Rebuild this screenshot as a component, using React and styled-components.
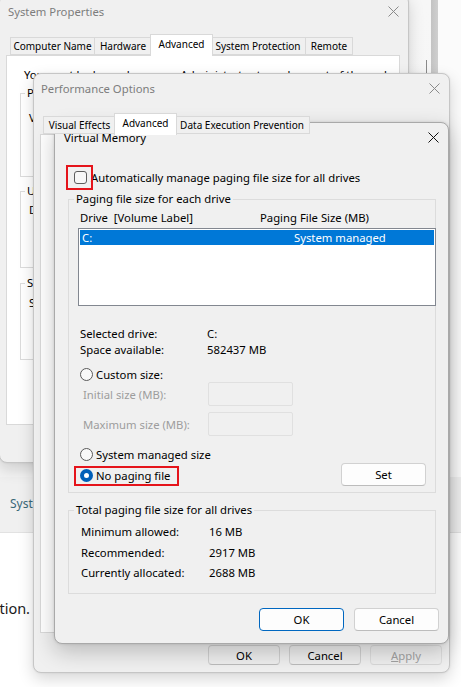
import React from "react";
import styled, { createGlobalStyle, css } from "styled-components";

const FONT = `"Noto Sans", "Open Sans", "DejaVu Sans", sans-serif`;

const GlobalStyle = createGlobalStyle`
  html, body { margin: 0; padding: 0; }
  body {
    font-family: ${FONT};
    font-size: 11.3px;
    color: #000;
    background: #fbfbfb;
    overflow: hidden;
  }
  * { box-sizing: border-box; }
`;

/* ---------- desktop & backdrop (settings app behind the dialogs) ---------- */

const Desktop = styled.div`
  position: relative;
  width: 461px;
  height: 687px;
  overflow: hidden;
  background: #fbfbfb;
`;

const Backdrop = styled.div`
  display: flex;
  flex-direction: column;
  height: 100%;
`;

const BackTop = styled.div`
  height: 477px;
  display: flex;
`;

const BackFill = styled.div`
  flex: 1;
  background: #f3f3f3;
`;

const BackSide = styled.div`
  width: 52px;
  display: flex;
`;

const SidePane = styled.div`
  width: 22px;
  background: linear-gradient(180deg, #f7f7f7 0%, #f4f4f4 100%);
  display: flex;
  flex-direction: column;
  align-items: flex-end;
  padding-right: 4px;
`;

const Tick = styled.div`
  margin-top: 60px;
  width: 1px;
  height: 13px;
  background: #8a8a8a;
`;

const Scrollbar = styled.div`
  width: 7px;
  background: linear-gradient(90deg, #c3c3c3, #cfcfcf);
`;

const SideRest = styled.div`
  flex: 1;
  background: #fbfbfb;
`;

const Band = styled.div`
  height: 56px;
  background: #f0f0f0;
  border-bottom: 1px solid #e2e2e2;
  display: flex;
  align-items: center;
  padding: 0 0 2px 10px;
  font-size: 12px;
  color: #3a6878;
  white-space: nowrap;
`;

const BackPage = styled.div`
  flex: 1;
  background: #ffffff;
  padding-top: 65px;
`;

const ClipText = styled.div`
  width: 30px;
  overflow: hidden;
  display: flex;
  justify-content: flex-end;
  white-space: nowrap;
  font-size: 14.5px;
  line-height: 20px;
  color: #1b1b1b;
`;

/* ---------- windows ---------- */

const Window = styled.div`
  position: absolute;
  left: ${(p) => p.$x}px;
  top: ${(p) => p.$y}px;
  width: ${(p) => p.$w}px;
  height: ${(p) => p.$h}px;
  background: #f0f0f0;
  border: 1px solid ${(p) => (p.$active ? "#a9a9a9" : "#c6c6c6")};
  border-radius: 8px;
  box-shadow: ${(p) =>
    p.$active
      ? "0 8px 22px rgba(0,0,0,0.22), 0 0 3px rgba(0,0,0,0.12)"
      : "0 6px 16px rgba(0,0,0,0.16), 0 0 2px rgba(0,0,0,0.1)"};
  display: flex;
  flex-direction: column;
  overflow: hidden;
`;

const TitleBar = styled.div`
  height: ${(p) => p.$h}px;
  flex: none;
  display: flex;
  align-items: center;
  justify-content: space-between;
  padding: 0 9px ${(p) => p.$pb || 0}px ${(p) => p.$pl}px;
  color: ${(p) => (p.$active ? "#000" : "#7d7d7d")};
  font-size: 11.3px;
`;

const CloseIcon = ({ color }) => (
  <svg width="11" height="11" viewBox="0 0 11 11" aria-hidden="true">
    <path d="M0.5 0.5L10.5 10.5M10.5 0.5L0.5 10.5" stroke={color} strokeWidth="1" />
  </svg>
);

/* ---------- tabs ---------- */

const TabStrip = styled.div`
  display: flex;
  align-items: flex-end;
  padding: ${(p) => p.$pt}px 0 0 ${(p) => p.$pl}px;
  position: relative;
  z-index: 1;
`;

const Tab = styled.div`
  width: ${(p) => p.$w}px;
  height: ${(p) => (p.$selected ? 22 : 18)}px;
  margin: ${(p) => (p.$selected ? "0 -2px -1px" : "0")};
  display: flex;
  align-items: center;
  justify-content: center;
  white-space: nowrap;
  font-size: 10px;
  background: ${(p) => (p.$selected ? "#ffffff" : "#f0f0f0")};
  border: 1px solid #d9d9d9;
  border-bottom: ${(p) => (p.$selected ? "none" : "1px solid #d9d9d9")};
  border-left: ${(p) => (p.$selected || p.$first ? "1px solid #d9d9d9" : "none")};
  position: relative;
  z-index: ${(p) => (p.$selected ? 2 : 1)};
  padding-bottom: ${(p) => (p.$selected ? 3 : 0)}px;
  color: #000;
`;

const TabPanel = styled.div`
  height: ${(p) => p.$h}px;
  margin: 0 ${(p) => p.$mr}px 0 ${(p) => p.$ml}px;
  background: #ffffff;
  border: 1px solid #d9d9d9;
  display: flex;
  flex-direction: column;
  padding: ${(p) => p.$pad};
  flex: none;
`;

/* ---------- generic controls ---------- */

const GroupBox = styled.fieldset`
  margin: ${(p) => p.$mt || 0}px 0 0 ${(p) => p.$ml || 0}px;
  min-width: 0;
  border: 1px solid ${(p) => p.$line || "#dcdcdc"};
  padding: 0 ${(p) => p.$pr || 0}px ${(p) => p.$pb || 0}px ${(p) => p.$pl || 0}px;
  display: flex;
  flex-direction: column;
`;

const Legend = styled.legend`
  padding: 0 2px;
  margin-left: ${(p) => p.$indent}px;
  line-height: 16px;
  font-size: 11.3px;
`;

const Text = styled.div`
  line-height: 16px;
  white-space: nowrap;
  margin: ${(p) => p.$mt || 0}px 0 0 ${(p) => p.$ml || 0}px;
  color: ${(p) => (p.$dim ? "#9d9d9d" : "#000")};
`;

const Button = styled.button`
  font: inherit;
  font-size: 11.3px;
  width: ${(p) => p.$w}px;
  height: ${(p) => p.$h}px;
  padding: 0;
  border-radius: 4px;
  background: ${(p) => (p.$flat ? "#efefef" : "#fdfdfd")};
  border: 1px solid ${(p) => (p.$primary ? "#0067c0" : p.$faint ? "#dedede" : "#d1d1d1")};
  border-bottom-color: ${(p) => (p.$primary ? "#0067c0" : p.$faint ? "#d8d8d8" : "#bcbcbc")};
  color: ${(p) => (p.$disabled ? "#a2a2a2" : "#000")};
  display: flex;
  align-items: center;
  justify-content: center;
  flex: none;
  cursor: default;
`;

const ButtonRow = styled.div`
  display: flex;
  justify-content: flex-end;
  gap: ${(p) => p.$gap}px;
  margin: ${(p) => p.$mt}px ${(p) => p.$mr}px 0 0;
`;

const Highlight = styled.span`
  position: relative;
  display: inline-flex;
  align-items: center;
  margin-top: ${(p) => p.$shift || 0}px;
  &::after {
    content: "";
    position: absolute;
    top: ${(p) => p.$t}px;
    bottom: ${(p) => p.$b}px;
    left: ${(p) => p.$l}px;
    right: ${(p) => p.$r}px;
    border: 2px solid #e5141b;
    pointer-events: none;
  }
`;

const CheckBox = styled.span`
  width: 13px;
  height: 13px;
  border: 1px solid #5d5d5d;
  border-radius: 3px;
  background: #f7f7f7;
  display: block;
`;

const CheckRow = styled.div`
  height: 25px;
  margin-top: 10px;
  display: flex;
  align-items: center;
  padding-left: 8px;
  gap: 4px;
  white-space: nowrap;
`;

const RadioRow = styled.div`
  display: flex;
  align-items: center;
  gap: 3px;
  height: 16px;
  margin: ${(p) => p.$mt || 0}px 0 0 2px;
  white-space: nowrap;
`;

const RadioCircle = styled.span`
  width: 13px;
  height: 13px;
  border-radius: 50%;
  flex: none;
  ${(p) =>
    p.$checked
      ? css`
          background: #ffffff;
          border: 4px solid #005fb8;
        `
      : css`
          background: #f9f9f9;
          border: 1px solid #5a5a5a;
        `}
`;

const Radio = ({ checked, children }) => (
  <>
    <RadioCircle $checked={checked} />
    <span>{children}</span>
  </>
);

/* ---------- virtual memory specific ---------- */

const VMBody = styled.div`
  display: flex;
  flex-direction: column;
  padding: 0 12px 0 11px;
`;

const Columns = styled.div`
  display: grid;
  grid-template-columns: ${(p) => p.$first}px 1fr;
  line-height: ${(p) => p.$lh || 15}px;
  height: ${(p) => p.$lh || 15}px;
  padding-left: ${(p) => p.$pl || 0}px;
  margin-top: ${(p) => p.$mt || 0}px;
  white-space: nowrap;
  background: ${(p) => (p.$selected ? "#0078d7" : "transparent")};
  color: ${(p) => (p.$selected ? "#ffffff" : "#000")};
`;

const ListBox = styled.div`
  height: 78px;
  margin-top: 3px;
  margin-right: -1px;
  background: #ffffff;
  border: 1px solid #828790;
  padding: 1px;
`;

const InfoGrid = styled.div`
  display: grid;
  grid-template-columns: ${(p) => p.$first}px 1fr;
  grid-auto-rows: 16px;
  row-gap: ${(p) => p.$gap || 0}px;
  line-height: 16px;
  margin: ${(p) => p.$mt || 0}px 0 0 ${(p) => p.$ml || 0}px;
  white-space: nowrap;
`;

const SizeRow = styled.div`
  display: flex;
  align-items: center;
  height: 24px;
  margin-top: ${(p) => p.$mt || 0}px;
  padding-left: 5px;
`;

const SizeLabel = styled.span`
  width: 125px;
  color: #9d9d9d;
  white-space: nowrap;
`;

const SizeInput = styled.span`
  width: 85px;
  height: 24px;
  border: 1px solid #e0e0e0;
  background: #f0f0f0;
  border-radius: 2px;
`;

const BottomRow = styled.div`
  display: flex;
  align-items: center;
  justify-content: space-between;
  height: 23px;
  margin-top: 1px;
  padding-right: 9px;
`;

const RadioLine = styled.span`
  display: inline-flex;
  align-items: center;
  gap: 3px;
  margin-left: 2px;
  height: 16px;
  white-space: nowrap;
`;

/* ---------- behind dialogs ---------- */

const GroupFoot = styled.div`
  display: flex;
  justify-content: flex-end;
  margin-top: ${(p) => p.$mt}px;
`;

export default function App() {
  return (
    <>
      <GlobalStyle />
      <Desktop>
        <Backdrop>
          <BackTop>
            <BackFill />
            <BackSide>
              <SidePane>
                <Tick />
              </SidePane>
              <Scrollbar />
              <SideRest />
            </BackSide>
          </BackTop>
          <Band>System Properties</Band>
          <BackPage>
            <ClipText>Protect your system configuration.</ClipText>
          </BackPage>
        </Backdrop>

        {/* System Properties */}
        <Window $x={-1} $y={-6} $w={410} $h={469}>
          <TitleBar $h={34} $pl={8} $pb={2}>
            <span>System Properties</span>
            <CloseIcon color="#8a8a8a" />
          </TitleBar>
          <TabStrip $pt={5} $pl={10}>
            <Tab $w={85} $first>Computer Name</Tab>
            <Tab $w={57}>Hardware</Tab>
            <Tab $w={63} $selected>Advanced</Tab>
            <Tab $w={95}>System Protection</Tab>
            <Tab $w={47}>Remote</Tab>
          </TabStrip>
          <TabPanel $h={370} $ml={6} $mr={8} $pad="11px 11px 0 13px">
            <Text $ml={4}>You must be logged on as an Administrator to make most of these changes.</Text>
            <GroupBox $mt={2} $pl={8} $pr={10} $pb={13}>
              <Legend $indent={-4}>Performance</Legend>
              <Text $mt={9}>Visual effects, processor scheduling, memory usage and virtual memory</Text>
              <GroupFoot $mt={14}>
                <Button $w={75} $h={23}>Settings...</Button>
              </GroupFoot>
            </GroupBox>
            <GroupBox $mt={6} $pl={8} $pr={10} $pb={12}>
              <Legend $indent={-4}>User Profiles</Legend>
              <Text $mt={3}>Desktop settings related to your sign-in</Text>
              <GroupFoot $mt={14}>
                <Button $w={75} $h={23}>Settings...</Button>
              </GroupFoot>
            </GroupBox>
            <GroupBox $mt={7} $pl={8} $pr={10} $pb={11}>
              <Legend $indent={-4}>Startup and Recovery</Legend>
              <Text $mt={4}>System startup, system failure, and debugging information</Text>
              <GroupFoot $mt={14}>
                <Button $w={75} $h={23}>Settings...</Button>
              </GroupFoot>
            </GroupBox>
          </TabPanel>
          <ButtonRow $gap={9} $mt={8} $mr={8}>
            <Button $w={72} $h={20} $flat>OK</Button>
            <Button $w={72} $h={20} $flat>Cancel</Button>
            <Button $w={72} $h={20} $flat $faint $disabled>Apply</Button>
          </ButtonRow>
        </Window>

        {/* Performance Options */}
        <Window $x={33} $y={73} $w={417} $h={600}>
          <TitleBar $h={29} $pl={7}>
            <span>Performance Options</span>
            <CloseIcon color="#8a8a8a" />
          </TitleBar>
          <TabStrip $pt={10} $pl={9}>
            <Tab $w={73} $first>Visual Effects</Tab>
            <Tab $w={63} $selected>Advanced</Tab>
            <Tab $w={135}>Data Execution Prevention</Tab>
          </TabStrip>
          <TabPanel $h={499} $ml={6} $mr={7} $pad="10px 8px 0 18px">
            <GroupBox $pl={8} $pr={8} $pb={12}>
              <Legend $indent={-4}>Processor scheduling</Legend>
              <Text $mt={6}>Choose how to allocate processor resources.</Text>
            </GroupBox>
            <GroupBox $mt={10} $pl={8} $pr={8} $pb={12}>
              <Legend $indent={-4}>Virtual memory</Legend>
              <Text $mt={6}>A paging file is an area on the hard disk that Windows uses as if it were RAM.</Text>
            </GroupBox>
          </TabPanel>
          <ButtonRow $gap={9} $mt={12} $mr={7}>
            <Button $w={72} $h={20} $flat>OK</Button>
            <Button $w={72} $h={20} $flat>Cancel</Button>
            <Button $w={72} $h={20} $flat $faint $disabled>
              <span>
                <u>A</u>pply
              </span>
            </Button>
          </ButtonRow>
        </Window>

        {/* Virtual Memory */}
        <Window $x={54} $y={122} $w={395} $h={522} $active>
          <TitleBar $h={32} $pl={9} $pb={3} $active>
            <span>Virtual Memory</span>
            <CloseIcon color="#111" />
          </TitleBar>
          <VMBody>
            <CheckRow>
              <Highlight $t={-6} $b={-6} $l={-8} $r={-6}>
                <CheckBox />
              </Highlight>
              <span>Automatically manage paging file size for all drives</span>
            </CheckRow>

            <GroupBox $mt={1} $ml={2} $pl={9} $pb={6}>
              <Legend $indent={-4}>Paging file size for each drive</Legend>
              <Columns $first={180} $pl={2} $mt={3}>
                <span>Drive&nbsp;&nbsp;[Volume Label]</span>
                <span>Paging File Size (MB)</span>
              </Columns>
              <ListBox>
                <Columns $first={212} $pl={2} $selected>
                  <span>C:</span>
                  <span>System managed</span>
                </Columns>
              </ListBox>
              <InfoGrid $first={127} $mt={20} $ml={2}>
                <span>Selected drive:</span>
                <span>C:</span>
                <span>Space available:</span>
                <span>582437 MB</span>
              </InfoGrid>
              <RadioRow $mt={8}>
                <Radio>Custom size:</Radio>
              </RadioRow>
              <SizeRow>
                <SizeLabel>Initial size (MB):</SizeLabel>
                <SizeInput />
              </SizeRow>
              <SizeRow $mt={6}>
                <SizeLabel>Maximum size (MB):</SizeLabel>
                <SizeInput />
              </SizeRow>
              <RadioRow $mt={10}>
                <Radio>System managed size</Radio>
              </RadioRow>
              <BottomRow>
                <Highlight $t={-2} $b={-2} $l={-4} $r={-9} $shift={2}>
                  <RadioLine>
                    <Radio checked>No paging file</Radio>
                  </RadioLine>
                </Highlight>
                <Button $w={85} $h={23}>Set</Button>
              </BottomRow>
            </GroupBox>

            <GroupBox $mt={9} $ml={2} $pl={12} $pb={12}>
              <Legend $indent={-7}>Total paging file size for all drives</Legend>
              <InfoGrid $first={128} $mt={6} $gap={4.5}>
                <span>Minimum allowed:</span>
                <span>16 MB</span>
                <span>Recommended:</span>
                <span>2917 MB</span>
                <span>Currently allocated:</span>
                <span>2688 MB</span>
              </InfoGrid>
            </GroupBox>

            <ButtonRow $gap={10} $mt={14} $mr={-3}>
              <Button $w={85} $h={23} $primary>OK</Button>
              <Button $w={85} $h={23}>Cancel</Button>
            </ButtonRow>
          </VMBody>
        </Window>
      </Desktop>
    </>
  );
}
